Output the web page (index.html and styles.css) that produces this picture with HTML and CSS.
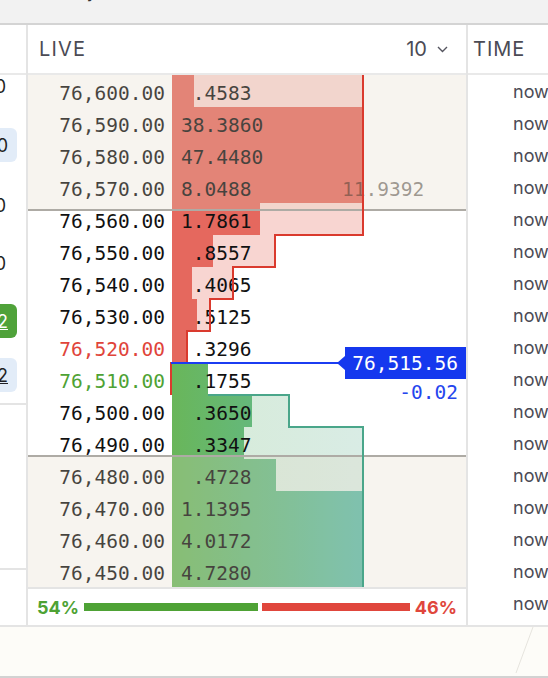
FILE: index.html
```html
<!DOCTYPE html>
<html lang="en">
<head>
  <meta charset="UTF-8">
  <meta name="viewport" content="width=device-width, initial-scale=1.0">
  <title>Live order book</title>
  <link rel="stylesheet" href="styles.css">
</head>
<body>
  <div class="topbar"><span class="topbar-title">Activity</span></div>

  <div class="main">
    <!-- left column, mostly scrolled out of view -->
    <aside class="side">
      <div class="side-head"></div>
      <div class="side-body">
        <div class="side-item first">1,120</div>
        <div class="side-item pill pill-light gap-a">0</div>
        <div class="side-item gap-b">2,300</div>
        <div class="side-item gap-c">4,100</div>
        <div class="side-item pill pill-green gap-c"><u>2</u></div>
        <div class="side-item pill pill-light gap-d"><u>2</u></div>
        <div class="side-rule rule-a"></div>
        <div class="side-rule rule-b"></div>
      </div>
    </aside>

    <!-- live order book -->
    <section class="live">
      <div class="live-head">
        <span class="live-title">LIVE</span>
        <span class="depth-select">10
          <svg width="11" height="7" viewBox="0 0 11 7"><path d="M1 1 L5.5 5.5 L10 1" fill="none" stroke="#55555f" stroke-width="1.4"/></svg>
        </span>
      </div>

      <div class="book">
        <!-- asks -->
        <div class="row">
          <div class="price">76,600.00</div>
          <div class="depth">
            <div class="bar ask-cum" style="width:191px"></div>
            <div class="bar ask-size" style="width:22px"></div>
            <span class="size"><span class="zero">0</span>.4583</span>
          </div>
        </div>
        <div class="row">
          <div class="price">76,590.00</div>
          <div class="depth">
            <div class="bar ask-cum" style="width:191px"></div>
            <div class="bar ask-size" style="width:191px"></div>
            <span class="size">38.3860</span>
          </div>
        </div>
        <div class="row">
          <div class="price">76,580.00</div>
          <div class="depth">
            <div class="bar ask-cum" style="width:191px"></div>
            <div class="bar ask-size" style="width:191px"></div>
            <span class="size">47.4480</span>
          </div>
        </div>
        <div class="row">
          <div class="price">76,570.00</div>
          <div class="depth">
            <div class="bar ask-cum" style="width:191px"></div>
            <div class="bar ask-size" style="width:191px"></div>
            <span class="size">8.0488</span>
          </div>
        </div>
        <div class="row">
          <div class="price">76,560.00</div>
          <div class="depth">
            <div class="bar ask-cum" style="width:191px"></div>
            <div class="bar ask-size" style="width:88px"></div>
            <span class="size">1.7861</span>
          </div>
        </div>
        <div class="row">
          <div class="price">76,550.00</div>
          <div class="depth">
            <div class="bar ask-cum" style="width:103px"></div>
            <div class="bar ask-size" style="width:41px"></div>
            <span class="size"><span class="zero">0</span>.8557</span>
          </div>
        </div>
        <div class="row">
          <div class="price">76,540.00</div>
          <div class="depth">
            <div class="bar ask-cum" style="width:61px"></div>
            <div class="bar ask-size" style="width:20px"></div>
            <span class="size"><span class="zero">0</span>.4065</span>
          </div>
        </div>
        <div class="row">
          <div class="price">76,530.00</div>
          <div class="depth">
            <div class="bar ask-cum" style="width:38px"></div>
            <div class="bar ask-size" style="width:25px"></div>
            <span class="size"><span class="zero">0</span>.5125</span>
          </div>
        </div>
        <div class="row">
          <div class="price best-ask">76,520.00</div>
          <div class="depth">
            <div class="bar ask-size" style="width:15px"></div>
            <span class="size"><span class="zero">0</span>.3296</span>
          </div>
        </div>

        <!-- bids -->
        <div class="row">
          <div class="price best-bid">76,510.00</div>
          <div class="depth">
            <div class="bar bid-size" style="width:36px"></div>
            <span class="size"><span class="zero">0</span>.1755</span>
          </div>
        </div>
        <div class="row">
          <div class="price">76,500.00</div>
          <div class="depth">
            <div class="bar bid-cum" style="width:117px"></div>
            <div class="bar bid-size" style="width:80px"></div>
            <span class="size"><span class="zero">0</span>.3650</span>
          </div>
        </div>
        <div class="row">
          <div class="price">76,490.00</div>
          <div class="depth">
            <div class="bar bid-cum" style="width:191px"></div>
            <div class="bar bid-size" style="width:72px"></div>
            <span class="size"><span class="zero">0</span>.3347</span>
          </div>
        </div>
        <div class="row">
          <div class="price">76,480.00</div>
          <div class="depth">
            <div class="bar bid-cum" style="width:191px"></div>
            <div class="bar bid-size" style="width:104px"></div>
            <span class="size"><span class="zero">0</span>.4728</span>
          </div>
        </div>
        <div class="row">
          <div class="price">76,470.00</div>
          <div class="depth">
            <div class="bar bid-cum" style="width:191px"></div>
            <div class="bar bid-size" style="width:191px"></div>
            <span class="size">1.1395</span>
          </div>
        </div>
        <div class="row">
          <div class="price">76,460.00</div>
          <div class="depth">
            <div class="bar bid-cum" style="width:191px"></div>
            <div class="bar bid-size" style="width:191px"></div>
            <span class="size">4.0172</span>
          </div>
        </div>
        <div class="row">
          <div class="price">76,450.00</div>
          <div class="depth">
            <div class="bar bid-cum" style="width:191px"></div>
            <div class="bar bid-size" style="width:191px"></div>
            <span class="size">4.7280</span>
          </div>
        </div>

        <!-- hover shading outside the selected range -->
        <div class="shade shade-top"></div>
        <div class="shade shade-bottom"></div>
        <div class="cum-label">11.9392</div>

        <!-- cumulative depth outlines -->
        <svg class="outline" width="438" height="512" viewBox="0 0 438 512">
          <path d="M335 0 V160 H247 V192 H205 V224 H182 V256 H159 V288 H143 V320" fill="none" stroke="#da3a2e" stroke-width="2"/>
          <path d="M180 320 H261 V352 H335 V512" fill="none" stroke="#4aa68a" stroke-width="2"/>
        </svg>

        <div class="mid-line"></div>
        <div class="mid-tag">76,515.56</div>
        <div class="mid-change">-0.02</div>
      </div>

      <div class="ratio">
        <span class="ratio-buy">54%</span>
        <div class="ratio-bars">
          <div class="ratio-bar buy" style="flex:54"></div>
          <div class="ratio-bar sell" style="flex:46"></div>
        </div>
        <span class="ratio-sell">46%</span>
      </div>
    </section>

    <!-- trade time column -->
    <section class="time">
      <div class="time-head">TIME</div>
      <div class="time-body">
        <div class="time-row">now</div>
        <div class="time-row">now</div>
        <div class="time-row">now</div>
        <div class="time-row">now</div>
        <div class="time-row">now</div>
        <div class="time-row">now</div>
        <div class="time-row">now</div>
        <div class="time-row">now</div>
        <div class="time-row">now</div>
        <div class="time-row">now</div>
        <div class="time-row">now</div>
        <div class="time-row">now</div>
        <div class="time-row">now</div>
        <div class="time-row">now</div>
        <div class="time-row">now</div>
        <div class="time-row">now</div>
        <div class="time-row">now</div>
      </div>
    </section>
  </div>

  <div class="bottom">
    <svg class="bottom-mark" width="30" height="50" viewBox="0 0 30 50"><line x1="23" y1="0" x2="6" y2="46" stroke="#e6e4de" stroke-width="1"/></svg>
  </div>
</body>
</html>
```

FILE: styles.css
```css
/* page */
html, body {
  margin: 0;
  padding: 0;
  overflow: hidden;
}
body {
  width: 548px;
  height: 678px;
  font-family: Inter, "Noto Sans", sans-serif;
  color: #1f1f24;
  background: #fdfcf8;
}

/* top bar, only the bottom of its title is visible */
.topbar {
  height: 23px;
  background: #f2f2f2;
  border-bottom: 2px solid #d4d4d4;
  overflow: hidden;
}
.topbar-title {
  display: block;
  margin-top: -18px;
  padding-left: 36px;
  font-size: 17px;
  line-height: 20px;
  color: #333;
}

.main {
  display: flex;
  height: 600px;
  border-bottom: 2px solid #e4e4e4;
  background: #fff;
}

/* left column */
.side {
  width: 26px;
  border-right: 2px solid #e4e4e4;
  overflow: hidden;
  flex-shrink: 0;
}
.side-head {
  height: 48px;
  border-bottom: 2px solid #e9e9e9;
}
.side-body {
  display: flex;
  flex-direction: column;
}
.side-item {
  display: flex;
  justify-content: flex-end;
  align-items: center;
  white-space: nowrap;
  height: 34px;
  width: 46px;
  margin-left: -26px;
  padding-right: 14px;
  box-sizing: border-box;
  font-size: 18px;
}
.side-item.first {
  height: 22px;
}
.pill {
  width: 43px;
  padding-right: 9px;
  border-radius: 6px;
}
.pill-light {
  background: #e2ecf8;
}
.pill-green {
  background: #4fa23a;
  color: #fff;
}
.gap-a { margin-top: 31px; }
.gap-b { margin-top: 26px; }
.gap-c { margin-top: 24px; }
.gap-d { margin-top: 20px; }
.side-rule {
  height: 2px;
  background: #e4e4e4;
}
.rule-a { margin-top: 11px; }
.rule-b { margin-top: 163px; }

/* live book */
.live {
  width: 438px;
  border-right: 2px solid #e4e4e4;
  flex-shrink: 0;
  display: flex;
  flex-direction: column;
}
.live-head {
  height: 48px;
  border-bottom: 2px solid #e9e9e9;
  display: flex;
  align-items: center;
  justify-content: space-between;
  padding: 0 18px 0 11px;
  font-size: 20px;
  color: #4b4b55;
}
.live-title {
  letter-spacing: 1.2px;
}
.depth-select {
  display: flex;
  align-items: center;
  gap: 10px;
}

.book {
  position: relative;
  height: 512px;
  overflow: hidden;
}
.row {
  display: flex;
  height: 32px;
  font-family: "DejaVu Sans Mono", "Liberation Mono", monospace;
  font-size: 19.5px;
  line-height: 32px;
  color: #111;
}
.price {
  width: 137px;
  padding-top: 3px;
  text-align: right;
}
.best-ask {
  color: #e0443a;
}
.best-bid {
  color: #4ea234;
}
.depth {
  position: relative;
  width: 191px;
  margin-left: 7px;
}
.bar {
  position: absolute;
  left: 0;
  top: 0;
  bottom: 0;
}
.ask-cum {
  background: #f8d5d1;
}
.ask-size {
  background: #e5685e;
}
.bid-cum {
  background: linear-gradient(90deg, #d6ebd6, #d9ece5);
  background-size: 191px 100%;
  background-repeat: no-repeat;
}
.bid-size {
  background: linear-gradient(90deg, #69b65a, #5ebba9);
  background-size: 191px 100%;
  background-repeat: no-repeat;
}
.size {
  position: relative;
  display: block;
  padding: 3px 0 0 9px;
}
.zero {
  color: transparent;
}

/* shading over rows outside the hovered range */
.shade {
  position: absolute;
  left: 0;
  right: 0;
  background: rgba(225, 212, 192, 0.26);
}
.shade-top {
  top: 0;
  height: 134px;
  border-bottom: 2px solid #aeaba5;
}
.shade-bottom {
  top: 380px;
  bottom: 0;
  border-top: 2px solid #aeaba5;
}
.cum-label {
  position: absolute;
  left: 314px;
  top: 99px;
  font-family: "DejaVu Sans Mono", "Liberation Mono", monospace;
  font-size: 19.5px;
  line-height: 32px;
  color: rgba(70, 60, 50, 0.5);
}

.outline {
  position: absolute;
  left: 0;
  top: 0;
}

/* mid price marker */
.mid-line {
  position: absolute;
  left: 143px;
  top: 287px;
  width: 175px;
  height: 2px;
  background: #1b3cf2;
}
.mid-tag {
  position: absolute;
  left: 317px;
  top: 272px;
  width: 121px;
  height: 32px;
  box-sizing: border-box;
  padding: 1px 8px 0 0;
  text-align: right;
  background: #1538ee;
  color: #fff;
  font-family: "DejaVu Sans Mono", "Liberation Mono", monospace;
  font-size: 19.5px;
  line-height: 32px;
}
.mid-tag::before {
  content: "";
  position: absolute;
  left: -8px;
  top: 9px;
  border-top: 7px solid transparent;
  border-bottom: 7px solid transparent;
  border-right: 8px solid #1538ee;
}
.mid-change {
  position: absolute;
  right: 8px;
  top: 307px;
  font-family: "DejaVu Sans Mono", "Liberation Mono", monospace;
  font-size: 19.5px;
  line-height: 22px;
  color: #2545ee;
}

/* buy / sell ratio */
.ratio {
  height: 36px;
  border-top: 2px solid #e4e4e4;
  display: flex;
  align-items: center;
  gap: 5px;
  padding: 0 9px;
  font-size: 18px;
  font-weight: 700;
}
.ratio-buy {
  color: #4ea234;
}
.ratio-sell {
  color: #e0463c;
}
.ratio-bars {
  flex: 1;
  display: flex;
  gap: 4px;
}
.ratio-bar {
  height: 8px;
}
.ratio-bar.buy {
  background: #4ea235;
}
.ratio-bar.sell {
  background: #e0463c;
}

/* time column */
.time {
  flex: 1;
  overflow: hidden;
}
.time-head {
  height: 48px;
  border-bottom: 2px solid #e9e9e9;
  display: flex;
  align-items: center;
  padding-left: 5px;
  font-size: 20px;
  color: #4b4b55;
  letter-spacing: 1px;
  white-space: nowrap;
}
.time-row {
  height: 32px;
  line-height: 32px;
  padding: 1px 0 0 45px;
  box-sizing: border-box;
  font-size: 18px;
  color: #4b4b55;
  white-space: nowrap;
}

/* empty area below the panels */
.bottom {
  position: relative;
  height: 49px;
  border-bottom: 2px solid #d2d2d2;
}
.bottom-mark {
  position: absolute;
  left: 510px;
  top: 0;
}
```
